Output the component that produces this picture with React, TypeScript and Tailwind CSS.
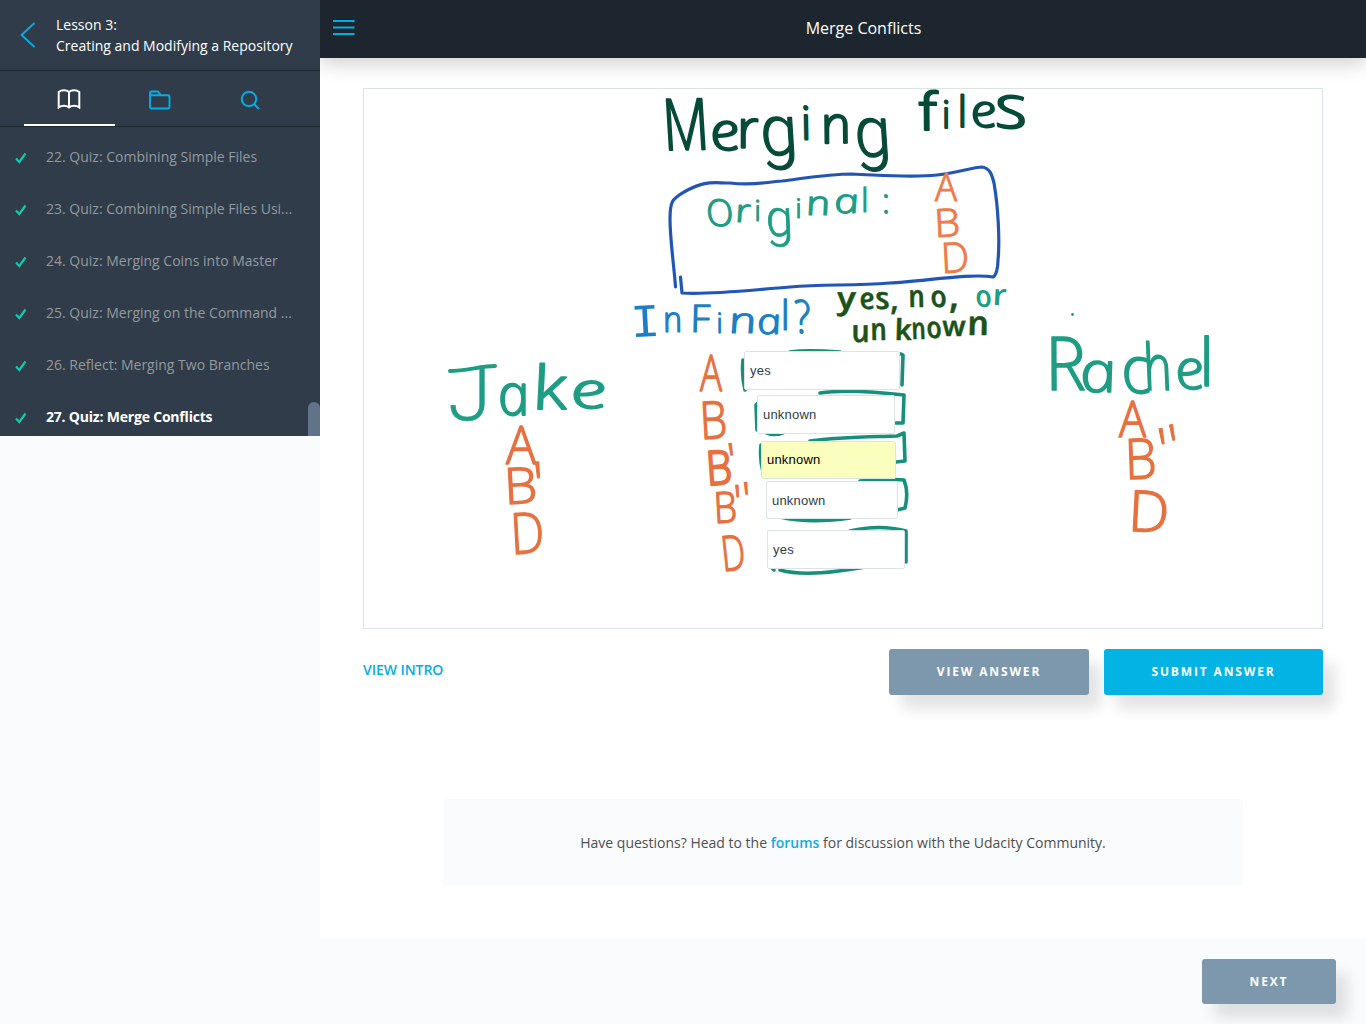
import React from "react";

type Glyph = [ch: string, x: number, y: number, size: number, width?: number];

const GREEN = "#064b3a";
const TEAL = "#1e9d84";
const ORANGE = "#e8703f";
const SKY = "#1a7fc4";
const FOREST = "#1d5218";
const SLOPE = Math.tan((12 * Math.PI) / 180);

/* One handwritten word: every letter sits at its own left edge and baseline. */
function Ink({ color, glyphs, bold = 1.1, weight = 300, upright = false, family = "Open Sans", tilt = 0 }: {
  color: string; glyphs: Glyph[]; bold?: number; weight?: number; upright?: boolean; family?: string; tilt?: number;
}) {
  const [, ox, oy] = glyphs[0];
  const k = upright ? 0 : SLOPE;
  return (
    <text
      transform={`translate(${ox} ${oy}) rotate(${tilt})${upright ? "" : " skewX(12)"}`}
      fill={color} stroke={color} strokeWidth={bold} strokeLinejoin="round"
      fontFamily={`"${family}", sans-serif`} fontStyle={upright ? "normal" : "italic"} fontWeight={weight}
    >
      {glyphs.map(([ch, x, y, size, w], i) => (
        <tspan
          key={i}
          x={x - ox - k * (y - oy) - size * (upright && ch !== "A" ? 0.08 : 0)}
          y={y - oy}
          fontSize={size}
          strokeWidth={ch === "g" ? bold * 0.6 : bold}
          fontFamily={ch === "g" || ch === "f" ? "Roboto, sans-serif" : undefined}
          textLength={w ? w + size * (ch === "A" || ch === "f" ? 0 : 0.12) : undefined}
          lengthAdjust={w ? "spacingAndGlyphs" : undefined}
        >{ch}</tspan>
      ))}
    </text>
  );
}

function Whiteboard() {
  return (
    <svg className="block h-full w-full" viewBox="364 89 958 539" fill="none" strokeLinecap="round" strokeLinejoin="round">
      <Ink color={GREEN} bold={2} tilt={-1} glyphs={[["M", 667, 150, 71, 38], ["e", 713, 151, 53, 24], ["r", 740, 149, 53, 16], ["g", 765, 157, 71, 29], ["i", 804, 142, 46], ["n", 824, 146, 52, 24], ["g", 859, 160, 71, 28]]} />
      <Ink color={GREEN} bold={1.9} glyphs={[["f", 921, 130, 52, 20], ["i", 944, 128, 38], ["l", 960, 127, 43], ["e", 973, 127, 46, 21], ["s", 998, 128, 60, 26]]} />
      <path stroke="#2056b8" strokeWidth="3.2" d="M675.500 287C674 265 670 240 670 219C670 200 673 199 684 192C705 180 712 183 730 183C755 186 765 182 782 181C806 178 830 174 852 174C880 175 910 178 937 175C957 173 973 167 982 167C990 168 992 175 994 183C998 206 1000 240 998 260C998 268 996 276 993 277C970 273 920 282 890 283C850 286 825 284 790 287C750 290 710 295 682 293L680.500 277" />
      <Ink color={TEAL} bold={1.2} glyphs={[["O", 708, 226, 37, 23], ["r", 737, 222, 32, 12], ["i", 756, 221, 29], ["g", 769, 236, 52, 21], ["i", 797, 218, 27], ["n", 808, 215, 34, 20], ["a", 836, 213, 34, 21], ["l", 863, 212, 33], [":", 884, 213, 34]]} />
      <Ink color="#f07a49" upright glyphs={[["A", 935, 201, 39, 22]]} />
      <Ink color="#f07a49" upright tilt={-3} glyphs={[["B", 938, 237, 39, 21]]} />
      <Ink color="#f07a49" upright tilt={-3} glyphs={[["D", 945, 273, 42, 23]]} />
      <Ink color={SKY} upright bold={0} family="Liberation Mono" tilt={-3} glyphs={[["I", 635, 337, 47, 24]]} />
      <Ink color={SKY} bold={1.2} glyphs={[["n", 665, 332, 36, 15]]} />
      <Ink color={SKY} bold={1.2} glyphs={[["F", 692, 332, 38, 16], ["i", 718, 333, 28], ["n", 731, 333, 36, 23], ["a", 759, 334, 36, 20], ["l", 783, 330, 41], ["?", 797, 333, 46, 11]]} />
      <Ink color={FOREST} weight={600} bold={0.4} glyphs={[["y", 839, 309, 31, 15], ["e", 861, 309, 30, 12], ["s", 877, 309, 31, 11], [",", 892, 310, 32]]} />
      <Ink color={FOREST} weight={600} bold={0.4} glyphs={[["n", 910, 307, 31, 13], ["o", 932, 307, 30, 13], [",", 951, 308, 38]]} />
      <Ink color={TEAL} weight={600} bold={0} glyphs={[["o", 977, 307, 31, 13], ["r", 994, 305, 29, 11]]} />
      <Ink color={FOREST} weight={600} bold={0.4} glyphs={[["u", 853, 342, 31, 15], ["n", 872, 340, 31, 13], ["k", 896, 340, 29, 14], ["n", 913, 339, 30, 11], ["o", 928, 338, 30, 12], ["w", 944, 336, 28, 20], ["n", 969, 335, 34, 18]]} />

      <Ink color={TEAL} upright bold={0.4} family="Roboto" glyphs={[["J", 454, 420, 76, 34]]} />
      <path stroke={TEAL} strokeWidth="4" d="M450 371C465 371 482 366 495 366" />
      <Ink color={TEAL} bold={1.8} glyphs={[["a", 501, 415, 58, 25], ["k", 536, 409, 60, 27], ["e", 573, 408, 50, 31]]} />
      <Ink color={ORANGE} upright bold={1.4} glyphs={[["A", 506, 464, 53, 30]]} />
      <Ink color={ORANGE} upright bold={1.4} tilt={-3} glyphs={[["B", 509, 504, 50, 27]]} />
      <Ink color={ORANGE} upright bold={1} tilt={-5} glyphs={[["'", 540, 506, 62]]} />
      <Ink color={ORANGE} upright bold={1.4} tilt={-3} glyphs={[["D", 516, 554, 57, 27]]} />

      <Ink color={ORANGE} upright bold={1.4} glyphs={[["A", 700, 391, 50, 22]]} />
      <Ink color={ORANGE} upright bold={1.4} tilt={-3} glyphs={[["B", 705, 439, 52, 21]]} />
      <Ink color={ORANGE} upright bold={2.4} tilt={-4} glyphs={[["B", 711, 485, 47, 20]]} />
      <Ink color={ORANGE} upright tilt={-8} glyphs={[["'", 734, 476, 46]]} />
      <Ink color={ORANGE} upright bold={1.4} tilt={-3} glyphs={[["B", 718, 523, 43, 18]]} />
      <Ink color={ORANGE} upright tilt={-5} glyphs={[["'", 739, 518, 46], ["'", 748, 516, 46]]} />
      <Ink color={ORANGE} upright bold={1.4} tilt={-6} glyphs={[["D", 727, 571, 49, 18]]} />

      <g stroke="#16907a" strokeWidth="3.6">
        <path d="M743 360C742 370 743 382 745 390M790 352C805 350 825 351 840 352M901 354L903 355L902 385" />
        <path d="M758 403L756 405L757 430M820 393C840 390 870 391 904 395L903 423H896M764 432Q774 437 785 432" />
        <path d="M761 445C760 455 761 465 763 472M810 441C840 437 870 437 897 436L904 433L905 461L896 462" />
        <path d="M860 481Q885 478 904 480C908 490 907 500 905 508L897 510M780 517Q810 524 850 518" />
        <path d="M850 531Q880 524 906 531L906 562M772 568L774 570M780 570C805 577 840 571 865 567" />
      </g>

      <circle cx="1072.500" cy="314.500" r="1.400" fill={TEAL} />
      <Ink color={TEAL} bold={1.6} glyphs={[["R", 1049, 390, 74, 32], ["a", 1083, 392, 57, 30], ["c", 1125, 393, 66, 21], ["h", 1147, 390, 64, 21], ["e", 1178, 389, 56, 23], ["l", 1203, 386, 66]]} />
      <Ink color={ORANGE} upright bold={1.4} glyphs={[["A", 1119, 437, 50, 27]]} />
      <Ink color={ORANGE} upright bold={1.4} tilt={-2} glyphs={[["B", 1130, 479, 56, 25]]} />
      <Ink color={ORANGE} upright bold={1} tilt={-10} glyphs={[["'", 1167, 471, 60], ["'", 1178, 469, 60]]} />
      <Ink color={ORANGE} upright bold={1.4} tilt={3} glyphs={[["D", 1132, 531, 57, 34]]} />
    </svg>
  );
}

function Check() {
  return (
    <svg className="mt-0.5 ml-[15px] h-3 w-3 shrink-0" viewBox="0 0 12 12" fill="none" stroke="#12c9ac" strokeWidth="2.2">
      <path d="M1 6.500L4.300 10L10.500 1.500" />
    </svg>
  );
}

const lessons = [
  "22. Quiz: Combining Simple Files",
  "23. Quiz: Combining Simple Files Usi...",
  "24. Quiz: Merging Coins into Master",
  "25. Quiz: Merging on the Command ...",
  "26. Reflect: Merging Two Branches",
  "27. Quiz: Merge Conflicts",
];

function Sidebar() {
  return (
    <aside className="relative z-20 w-80 shrink-0 bg-[#fafbfd]">
      <div className="flex h-[71px] items-center border-b border-[#1c262f] bg-[#303c49]">
        <svg className="ml-5 h-[26px] w-4" viewBox="0 0 16 26" fill="none" stroke="#02aeea" strokeWidth="1.8">
          <path d="M14.500 1L1.500 13L14.500 25" />
        </svg>
        <div className="ml-5 text-sm leading-[21px] text-white">Lesson 3:<br />Creating and Modifying a Repository</div>
      </div>
      <div className="flex h-14 border-b border-[#1c262f] bg-[#303c49] px-6 text-[#02aeea]">
        <div className="flex w-[91px] items-center justify-center border-b-2 border-white pt-[3px] pr-0.5">
          <svg className="h-5 w-6" viewBox="0 0 24 20" fill="none" stroke="white" strokeWidth="2">
            <path d="M12 3V18M12 3C9.500 0.800 4.500 0.800 1.700 3V18.500C4.500 16.300 9.500 16.300 12 18.500C14.500 16.300 19.500 16.300 22.300 18.500V3C19.500 0.800 14.500 0.800 12 3Z" />
          </svg>
        </div>
        <div className="flex w-[91px] items-center justify-center pr-0.5">
          <svg className="mt-0.5 h-5 w-[22px]" viewBox="0 0 22 20" fill="none" stroke="currentColor" strokeWidth="1.900" strokeLinejoin="round">
            <path d="M1 5.700V3Q1 1.500 2.500 1.500H9L12 5.200H19Q20.500 5.200 20.500 6.700V17Q20.500 18.500 19 18.500H2.500Q1 18.500 1 17V5.200H12" />
          </svg>
        </div>
        <div className="flex w-[89px] items-center justify-center pr-0.5">
          <svg className="mt-0.5 h-5 w-5" viewBox="0 0 20 20" fill="none" stroke="currentColor" strokeWidth="2">
            <circle cx="9" cy="9" r="7.200" /><path d="M14 14L19 19" />
          </svg>
        </div>
      </div>
      <ul className="relative h-[309px] overflow-hidden bg-[#303c49] pt-1">
        {lessons.map((label, i) => (
          <li key={label} className="flex h-[52px] items-center">
            <Check />
            <span className={i === 5 ? "ml-[19px] text-sm font-bold tracking-[-0.2px] text-white" : "ml-[19px] text-sm text-[#929a9f]"}>{label}</span>
          </li>
        ))}
        <li className="absolute right-0 bottom-0 h-[34px] w-3 rounded-t-full bg-[#617388]" />
      </ul>
    </aside>
  );
}

const field = "absolute rounded-[2px] border border-[#dbe2e8] pl-[5px] font-['Liberation_Sans',sans-serif] text-[13px] tracking-[0.2px] outline-none";
const button = "rounded-[3px] text-xs font-bold tracking-[1.85px] text-white shadow-[12px_14px_14px_rgba(0,0,0,0.11)]";

export default function App() {
  return (
    <div className="flex h-[1024px] w-[1366px] overflow-hidden bg-[#fafbfd] font-['Open_Sans',sans-serif]">
      <Sidebar />
      <div className="flex min-w-0 flex-1 flex-col">
        <header className="z-10 flex h-[58px] shrink-0 items-center bg-[#1d262e] pb-0.5 shadow-[0_5px_20px_rgba(0,0,0,0.2)]">
          <svg className="mb-0.5 ml-[13px] h-4 w-[22px]" viewBox="0 0 22 16" stroke="#02aeea" strokeWidth="2">
            <path d="M0 2H21.500M0 8.500H21.500M0 15H21.500" />
          </svg>
          <h1 className="flex-1 pr-[29px] pl-[35px] text-center text-base text-white">Merge Conflicts</h1>
        </header>
        <main className="flex h-[880px] shrink-0 flex-col bg-white pt-[30px] pr-[43px] pl-[43px]">
          <div className="relative h-[541px] w-[960px] shrink-0 border border-[#dbe2e8]">
            <Whiteboard />
            <input defaultValue="yes" className={`${field} top-[262px] left-[380px] h-[39px] w-[156px] bg-white text-[#2f3c49]`} />
            <input defaultValue="unknown" className={`${field} top-[306px] left-[393px] h-[39px] w-[138px] bg-white text-[#2f3c49]`} />
            <input defaultValue="unknown" className={`${field} top-[352px] left-[397px] h-[38px] w-[135px] bg-[#faffbd] pb-0.5 text-black`} />
            <input defaultValue="unknown" className={`${field} top-[392px] left-[402px] h-[38px] w-[132px] bg-white text-[#2f3c49]`} />
            <input defaultValue="yes" className={`${field} top-[441px] left-[403px] h-[39px] w-[138px] bg-white text-[#2f3c49]`} />
          </div>
          <div className="mt-5 flex h-[46px] shrink-0">
            <a className="mt-2.5 text-sm leading-[22px] font-semibold tracking-[-0.05px] text-[#02aeea]">VIEW INTRO</a>
            <button className={`${button} ml-auto w-[200px] bg-[#7d97ad]`}>VIEW ANSWER</button>
            <button className={`${button} ml-[15px] w-[219px] bg-[#02b3e4]`}>SUBMIT ANSWER</button>
          </div>
          <div className="mt-[104px] flex h-[87px] w-[800px] items-center justify-center self-center rounded-[3px] bg-[#fafbfd] text-sm text-[#4f4f4f]">
            <p>Have questions? Head to the <b className="font-semibold text-[#18a9dc]">forums</b> for discussion with the Udacity Community.</p>
          </div>
        </main>
        <footer className="flex pt-[21px] pr-[30px]">
          <button className={`${button} ml-auto h-[45px] w-[134px] bg-[#7d97ad]`}>NEXT</button>
        </footer>
      </div>
    </div>
  );
}
